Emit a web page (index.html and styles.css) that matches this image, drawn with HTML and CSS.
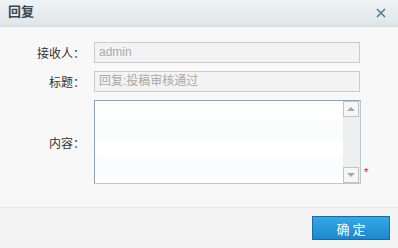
FILE: index.html
```html
<!DOCTYPE html>
<html>

<head>
    <meta charset="utf-8">
    <title>回复</title>
    <link rel="stylesheet" href="styles.css">
</head>

<body>
    <div class="dlg">
        <div class="dlg-head">
            <div class="dlg-title">回复</div>
            <svg class="dlg-close" width="10" height="10" viewBox="0 0 10 10">
                <path d="M1 1L9 9M9 1L1 9" stroke="#5a7a90" stroke-width="1.6" />
            </svg>
        </div>
        <div class="dlg-body">
            <div class="form-row">
                <label class="form-label">接收人：</label>
                <div class="form-input">admin</div>
            </div>
            <div class="form-row">
                <label class="form-label">标题：</label>
                <div class="form-input">回复:投稿审核通过</div>
            </div>
            <div class="form-row">
                <label class="form-label">内容：</label>
                <div class="form-area">
                    <div class="area-text"></div>
                    <div class="area-bar">
                        <div class="bar-btn"><span class="arrow-up"></span></div>
                        <div class="bar-btn"><span class="arrow-down"></span></div>
                    </div>
                </div>
                <span class="required">*</span>
            </div>
        </div>
        <div class="dlg-foot">
            <button class="btn-ok">确定</button>
        </div>
    </div>
</body>

</html>
```

FILE: styles.css
```css
html,
body {
    margin: 0;
    padding: 0;
    font-size: 12px;
    font-family: "Liberation Sans", "Noto Sans CJK SC", sans-serif;
}

.dlg {
    width: 398px;
    height: 248px;
    background: #f8f8f8;
    display: flex;
    flex-direction: column;
}

.dlg-head {
    height: 26px;
    border-bottom: 1px solid #d3dbe0;
    background: linear-gradient(#eef3f5, #dfe6ea);
    display: flex;
    align-items: center;
    padding: 0 12px 0 8px;
}

.dlg-title {
    flex: auto;
    font-size: 13px;
    font-weight: bold;
    color: #3a474f;
    line-height: 22px;
    margin-top: -3px;
}

.dlg-close {
    margin-top: -1px;
}

.dlg-body {
    height: 165px;
    padding-top: 15px;
    display: flex;
    flex-direction: column;
    gap: 8px;
}

.form-row {
    display: flex;
    align-items: center;
}

.form-label {
    width: 94px;
    text-align: right;
    color: #333;
    padding-right: 9px;
    box-sizing: border-box;
}

.form-input {
    width: 266px;
    height: 21px;
    box-sizing: border-box;
    border: 1px solid #cbcbcb;
    background: #f3f3f3;
    color: #a9a9a9;
    padding-left: 4px;
    line-height: 19px;
    font-size: 12px;
}

.form-area {
    width: 267px;
    height: 84px;
    box-sizing: border-box;
    border: 1px solid;
    border-color: #8ea2b4 #b8cad8 #b8cad8 #8ea2b4;
    display: flex;
}

.area-text {
    flex: auto;
    background: repeating-linear-gradient(#fff 0, #fff 19px, #fafcfe 19px, #fafcfe 38px);
}

.area-bar {
    width: 17px;
    background: #eee;
    display: flex;
    flex-direction: column;
    justify-content: space-between;
}

.bar-btn {
    width: 16px;
    height: 16px;
    box-sizing: border-box;
    border: 1px solid #c4c4c4;
    background: #f6f6f6;
    display: flex;
    align-items: center;
    justify-content: center;
}

.arrow-up {
    width: 0;
    height: 0;
    border-left: 4px solid transparent;
    border-right: 4px solid transparent;
    border-bottom: 4px solid #a8a8a8;
}

.arrow-down {
    width: 0;
    height: 0;
    border-left: 4px solid transparent;
    border-right: 4px solid transparent;
    border-top: 4px solid #a8a8a8;
}

.required {
    align-self: flex-end;
    color: #f00;
    font-size: 11px;
    margin: 0 0 6px 3px;
    line-height: 12px;
}

.dlg-foot {
    flex: auto;
    border-top: 1px solid #e6e7ec;
    background: #f4f4f4;
    display: flex;
    justify-content: flex-end;
    align-items: flex-start;
    padding: 8px 8px 0 0;
}

.btn-ok {
    width: 78px;
    height: 24px;
    border: 1px solid #1b6aa4;
    background: linear-gradient(#34a9e6, #1f87cd);
    color: #fff;
    font-size: 13px;
    letter-spacing: 3px;
    text-indent: 3px;
    padding: 0;
    font-family: "Noto Sans CJK SC", sans-serif;
}
```
